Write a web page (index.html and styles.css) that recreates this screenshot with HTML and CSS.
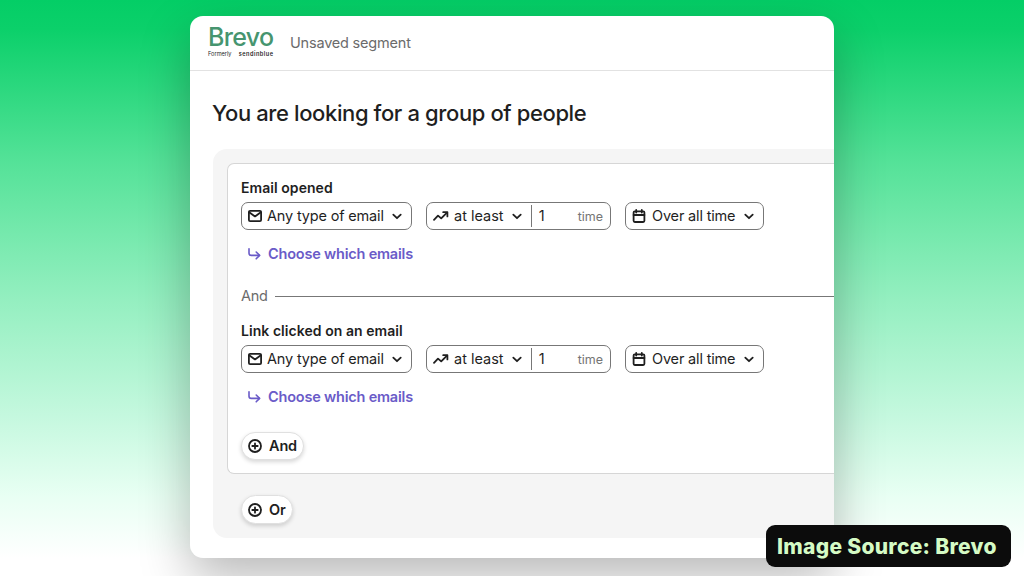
FILE: index.html
```html
<!DOCTYPE html>
<html lang="en">
<head>
  <meta charset="UTF-8">
  <meta name="viewport" content="width=device-width, initial-scale=1.0">
  <title>Brevo - Unsaved segment</title>
  <link rel="stylesheet" href="styles.css">
</head>
<body>
  <!-- Shared icons -->
  <svg class="icon-defs" width="0" height="0">
    <symbol id="icon-mail" viewBox="0 0 14 12">
      <rect x="0.9" y="0.9" width="12.2" height="10.2" rx="1.2"/>
      <path d="M1.2 2.2 L7 6.4 L12.8 2.2"/>
    </symbol>
    <symbol id="icon-trend" viewBox="0 0 16 10">
      <path d="M1 8.8 L5 4.6 L8.2 7.4 L14 1.6"/>
      <path d="M10.2 1.2 H14.4 V5.4"/>
    </symbol>
    <symbol id="icon-calendar" viewBox="0 0 14 14">
      <rect x="1.6" y="2.4" width="10.8" height="10.6" rx="1.2"/>
      <path d="M1.6 6 H12.4 M4.2 0.9 V3.6 M9.8 0.9 V3.6"/>
    </symbol>
    <symbol id="icon-chevron" viewBox="0 0 10 7">
      <path d="M1.3 1.6 L5 5.2 L8.7 1.6"/>
    </symbol>
    <symbol id="icon-branch" viewBox="0 0 13 12">
      <path d="M1 0.8 V5.2 Q1 7.4 3.2 7.4 H11.4"/>
      <path d="M8.2 4 L11.6 7.4 L8.2 10.8"/>
    </symbol>
    <symbol id="icon-plus" viewBox="0 0 14 14">
      <circle cx="7" cy="7" r="6"/>
      <path d="M7 4.3 V9.7 M4.3 7 H9.7"/>
    </symbol>
  </svg>

  <div class="card">
    <div class="header">
      <div class="logo">
        <span class="logo-name">Brevo</span>
        <span class="logo-sub"><span>Formerly</span><b>sendinblue</b></span>
      </div>
      <span class="segment-name">Unsaved segment</span>
    </div>

    <h1 class="title">You are looking for a group of people</h1>

    <div class="panel">
      <div class="group">
        <div class="condition">
          <div class="condition-label">Email opened</div>
          <div class="controls">
            <button class="select select-type">
              <svg class="icon icon-mail"><use href="#icon-mail"/></svg>
              <span class="select-text">Any type of email</span>
              <svg class="icon icon-chevron"><use href="#icon-chevron"/></svg>
            </button>
            <div class="select select-count">
              <svg class="icon icon-trend"><use href="#icon-trend"/></svg>
              <span class="select-text">at least</span>
              <svg class="icon icon-chevron"><use href="#icon-chevron"/></svg>
              <span class="count-value">1</span>
              <span class="count-unit">time</span>
            </div>
            <button class="select select-period">
              <svg class="icon icon-calendar"><use href="#icon-calendar"/></svg>
              <span class="select-text">Over all time</span>
              <svg class="icon icon-chevron"><use href="#icon-chevron"/></svg>
            </button>
          </div>
          <a class="choose-link">
            <svg class="icon icon-branch"><use href="#icon-branch"/></svg>
            <span>Choose which emails</span>
          </a>
        </div>

        <div class="divider">And</div>

        <div class="condition">
          <div class="condition-label">Link clicked on an email</div>
          <div class="controls">
            <button class="select select-type">
              <svg class="icon icon-mail"><use href="#icon-mail"/></svg>
              <span class="select-text">Any type of email</span>
              <svg class="icon icon-chevron"><use href="#icon-chevron"/></svg>
            </button>
            <div class="select select-count">
              <svg class="icon icon-trend"><use href="#icon-trend"/></svg>
              <span class="select-text">at least</span>
              <svg class="icon icon-chevron"><use href="#icon-chevron"/></svg>
              <span class="count-value">1</span>
              <span class="count-unit">time</span>
            </div>
            <button class="select select-period">
              <svg class="icon icon-calendar"><use href="#icon-calendar"/></svg>
              <span class="select-text">Over all time</span>
              <svg class="icon icon-chevron"><use href="#icon-chevron"/></svg>
            </button>
          </div>
          <a class="choose-link">
            <svg class="icon icon-branch"><use href="#icon-branch"/></svg>
            <span>Choose which emails</span>
          </a>
        </div>

        <button class="pill pill-and">
          <svg class="icon icon-plus"><use href="#icon-plus"/></svg>
          <span>And</span>
        </button>
      </div>

      <button class="pill pill-or">
        <svg class="icon icon-plus"><use href="#icon-plus"/></svg>
        <span>Or</span>
      </button>
    </div>
  </div>

  <div class="source-badge">Image Source: Brevo</div>
</body>
</html>
```
FILE: styles.css
```css
* {
  margin: 0;
  padding: 0;
  box-sizing: border-box;
}

body {
  width: 1024px;
  height: 576px;
  padding: 16px 0 0 190px;
  overflow: hidden;
  position: relative;
  font-family: Inter, "Liberation Sans", sans-serif;
  font-size: 14.5px;
  color: #1f1f1f;
  white-space: nowrap;
  background: linear-gradient(180deg, #04ce66 0%, #0bd06a 5%, #54e298 28%, #94efc0 52%, #c4f8de 72%, #e8fff3 86%, #ffffff 97%);
}

button {
  font: inherit;
  color: inherit;
}

.icon-defs {
  position: absolute;
}

.icon {
  flex: none;
  fill: none;
  stroke: currentColor;
  stroke-width: 1.8;
  stroke-linecap: round;
  stroke-linejoin: round;
}

.icon-mail { width: 14px; height: 12px; }
.icon-trend { width: 16px; height: 10px; }
.icon-calendar { width: 14px; height: 14px; }
.icon-chevron { width: 10px; height: 7px; }
.icon-branch { width: 13px; height: 12px; stroke-width: 1.6; }
.icon-plus { width: 14px; height: 14px; }

.card {
  width: 644px;
  height: 542px;
  border-radius: 13px;
  background: #ffffff;
  box-shadow: 0 20px 50px rgba(0, 0, 0, 0.28);
}

.header {
  display: flex;
  height: 55px;
  padding-left: 18px;
  border-bottom: 1px solid #e2e2e2;
}

.logo {
  width: 65px;
  padding-top: 7px;
}

.logo-name {
  display: block;
  height: 27px;
  line-height: 29px;
  font-size: 25px;
  font-weight: 500;
  letter-spacing: -0.7px;
  color: #46956f;
}

.logo-sub {
  display: flex;
  justify-content: space-between;
  height: 8px;
  line-height: 8px;
  font-size: 5.6px;
}

.logo-sub b {
  font-weight: 600;
  letter-spacing: 0.5px;
  margin-right: -0.5px;
}

.segment-name {
  margin-left: 17px;
  line-height: 53px;
  font-size: 14.5px;
  letter-spacing: -0.2px;
  color: #6b6b6b;
}

.title {
  height: 78px;
  padding: 28px 0 0 22px;
  line-height: 29px;
  font-size: 22px;
  font-weight: 500;
  letter-spacing: -0.39px;
}

.panel {
  height: 389px;
  margin-left: 23px;
  padding: 14px 0 0 14px;
  border-radius: 14px 0 0 14px;
  background: #f5f5f5;
}

.group {
  height: 311px;
  padding: 13px 0 0 13px;
  border: 1px solid #d6d6d6;
  border-right: 0;
  border-radius: 7px 0 0 7px;
  background: #ffffff;
}

.condition-label {
  height: 20px;
  margin-bottom: 5px;
  line-height: 22px;
  font-size: 14px;
  font-weight: 600;
  letter-spacing: 0.05px;
}

.controls {
  display: flex;
  gap: 14px;
}

.select {
  display: flex;
  align-items: center;
  height: 28px;
  padding: 0 9px 0 6px;
  border: 1px solid #777777;
  border-radius: 7px;
  background: #ffffff;
}

.select-type { width: 171px; }
.select-count { width: 185px; }
.select-period { width: 139px; }

.select-text {
  margin-left: 5px;
  padding-bottom: 1px;
  letter-spacing: -0.17px;
}

.select-count .select-text {
  letter-spacing: 0;
}

.select-period .select-text {
  margin-left: 6px;
}

.select .icon-chevron {
  margin-left: auto;
}

.select-count .icon-chevron {
  margin-left: 8px;
  margin-right: 9px;
}

.count-value {
  height: 22px;
  padding-left: 7px;
  line-height: 22px;
  border-left: 1px solid #777777;
}

.count-unit {
  margin-left: auto;
  margin-right: -2px;
  font-size: 12.5px;
  color: #757575;
}

.choose-link {
  display: flex;
  align-items: center;
  gap: 7px;
  height: 20px;
  margin-top: 14px;
  padding-left: 7px;
  font-weight: 600;
  letter-spacing: -0.2px;
  color: #6a5bc8;
}

.choose-link span {
  padding-bottom: 2px;
}

.divider {
  display: flex;
  align-items: center;
  gap: 7px;
  height: 20px;
  margin: 22px 0 14px;
  line-height: 18px;
  letter-spacing: -0.3px;
  color: #6b6b6b;
}

.divider::after {
  content: "";
  flex: 1;
  height: 1px;
  margin-top: 1px;
  background: #777777;
}

.pill {
  display: flex;
  align-items: center;
  gap: 7px;
  height: 29px;
  padding: 0 6px;
  border: 1px solid #e0e0e0;
  border-radius: 15px;
  background: #ffffff;
  font-weight: 600;
  letter-spacing: -0.15px;
  box-shadow: 0 2px 4px rgba(0, 0, 0, 0.16);
}

.pill span {
  padding-bottom: 1px;
}

.pill-and {
  width: 63px;
  height: 28px;
  margin-top: 25px;
}

.pill-or {
  width: 52px;
  margin: 21px 0 0 14px;
}

.source-badge {
  position: absolute;
  left: 766px;
  top: 525px;
  width: 245px;
  height: 42px;
  padding-left: 11px;
  border-radius: 9px;
  background: #0c0c0c;
  color: #d5fbc5;
  font-size: 21px;
  font-weight: 800;
  letter-spacing: 0.3px;
  line-height: 43px;
}
```
